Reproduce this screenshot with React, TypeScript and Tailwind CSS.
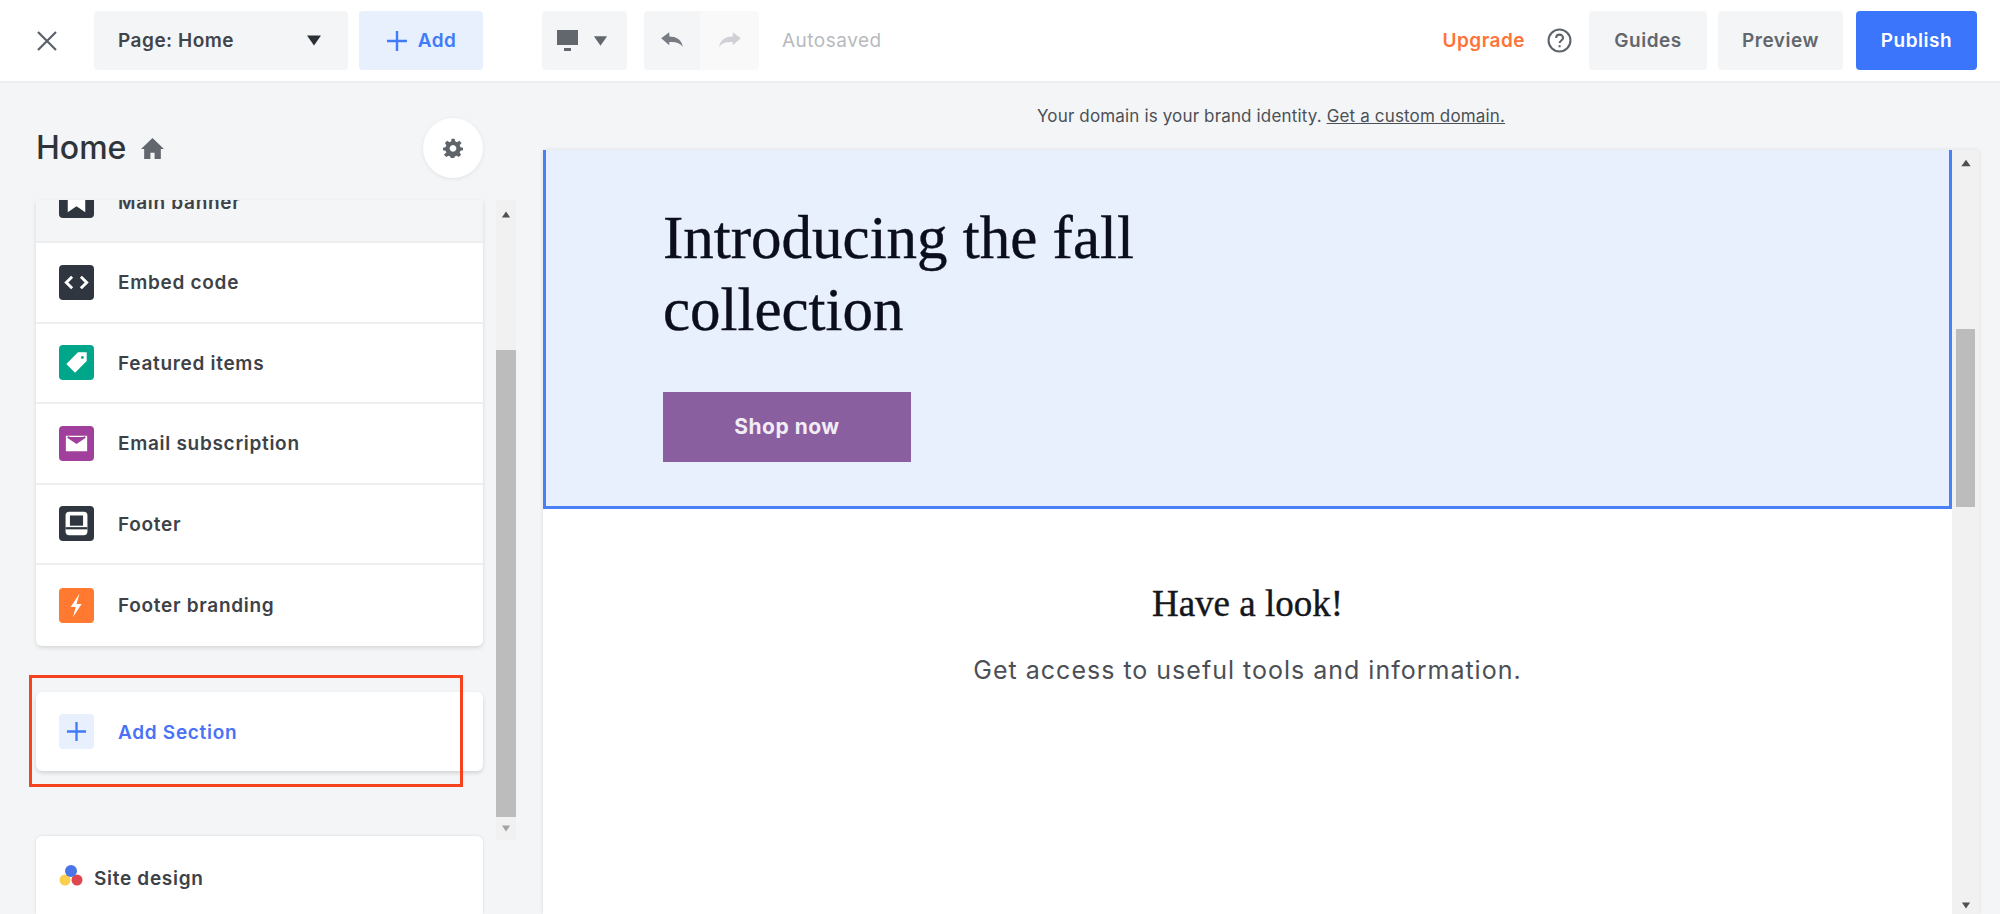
const sans = 'font-["Inter",sans-serif]';

function Caret({ className }: { className: string }) {
  return (
    <svg viewBox="0 0 16 12" className={className} fill="currentColor">
      <path d="M1 1h14L8 11z" />
    </svg>
  );
}

function UndoIcon({ flip }: { flip?: boolean }) {
  return (
    <svg viewBox="0 0 24 24" className={`w-[26px] h-[26px] ${flip ? '-scale-x-100' : ''}`} fill="currentColor">
      <path d="M2 9.500 9.500 4v3.800c6.500 0 11.500 3 12.500 9.700-2.500-3.700-6.500-5-12.500-4.500V16z" />
    </svg>
  );
}

function HeaderBar() {
  return (
    <header className="h-[83px] shrink-0 bg-white border-b-2 border-[#eeeff1] flex items-center pl-[36px] pr-[23px] text-[19px] tracking-[0.5px]">
      <svg viewBox="0 0 22 22" className="w-[22px] h-[22px] text-[#5b6068] mr-[36px]" fill="none" stroke="currentColor" strokeWidth="2.2">
        <path d="M2 2l18 18M20 2 2 20" />
      </svg>
      <button className="w-[254px] h-[59px] bg-[#f4f5f6] rounded-[4px] flex items-center justify-between pl-[24px] pr-[26px] font-semibold text-[#3f444b]">
        <span className="mt-[2px]">Page: Home</span>
        <Caret className="w-[16px] h-[13px] text-[#2b3036]" />
      </button>
      <button className="w-[124px] h-[59px] ml-[11px] bg-[#e8effd] rounded-[4px] flex items-center justify-center gap-[10px] font-semibold text-[#3f7bfa]">
        <svg viewBox="0 0 22 22" className="w-[22px] h-[22px]" fill="none" stroke="currentColor" strokeWidth="2.4">
          <path d="M11 1v20M1 11h20" />
        </svg>
        <span className="mt-[2px]">Add</span>
      </button>
      <button className="w-[85px] h-[59px] ml-[59px] bg-[#f4f5f6] rounded-[4px] flex items-center gap-[14px] pl-[15px] text-[#62676e]">
        <svg viewBox="0 0 22 22" className="w-[22px] h-[22px]" fill="currentColor">
          <path d="M0 0h21v15H0zM7 18h7v3H7z" />
        </svg>
        <Caret className="w-[15px] h-[12px]" />
      </button>
      <div className="flex ml-[17px]">
        <button className="w-[56px] h-[59px] bg-[#f4f5f6] rounded-l-[4px] flex items-center justify-center text-[#777b82]">
          <UndoIcon />
        </button>
        <button className="w-[59px] h-[59px] bg-[#f9f9fa] rounded-r-[4px] flex items-center justify-center text-[#cfd1d4]">
          <UndoIcon flip />
        </button>
      </div>
      <span className="ml-[23px] mt-[2px] text-[#b7babe]">Autosaved</span>
      <div className="ml-auto flex items-center">
        <span className="mt-[2px] font-semibold text-[#ff7338]">Upgrade</span>
        <svg viewBox="0 0 24 24" className="w-[25px] h-[25px] ml-[22px] mr-[17px] text-[#5f646b]" fill="none" stroke="currentColor" strokeWidth="2">
          <circle cx="12" cy="12" r="10.500" />
          <path d="M8.800 9.500c0-4.200 6.600-4.200 6.600 0 0 2.500-3.300 2.500-3.300 5" />
          <path d="M12.100 16.500v2" />
        </svg>
        <button className="w-[118px] h-[59px] pt-[2px] bg-[#f4f5f6] rounded-[4px] font-semibold text-[#62676e]">Guides</button>
        <button className="w-[125px] h-[59px] pt-[2px] ml-[11px] bg-[#f4f5f6] rounded-[4px] font-semibold text-[#62676e]">Preview</button>
        <button className="w-[121px] h-[59px] pt-[2px] ml-[13px] bg-[#3a75fb] rounded-[4px] font-semibold text-white">Publish</button>
      </div>
    </header>
  );
}

const rows = [
  { label: 'Embed code', bg: 'bg-[#2f3640]', icon: <path d="M9 8l-4 4 4 4M15 8l4 4-4 4" fill="none" stroke="white" strokeWidth="2" /> },
  { label: 'Featured items', bg: 'bg-[#00a68a]', icon: <path d="M5 13l8-8h6v6l-8 8zM16 7.500a1 1 0 1 0 .01 0z" fill="white" fillRule="evenodd" /> },
  { label: 'Email subscription', bg: 'bg-[#a0409c]', icon: <path d="M4 6h16v12H4zM6 7.500l6 4 6-4" fill="white" stroke="#a0409c" strokeWidth="1.400" /> },
  {
    label: 'Footer',
    bg: 'bg-[#2f3640]',
    icon: (
      <>
        <rect x="4.500" y="4" width="15" height="16" rx="2.500" fill="white" />
        <rect x="7.500" y="6.500" width="9" height="7" fill="#2f3640" />
        <rect x="4.500" y="14.500" width="15" height="1.500" fill="#2f3640" />
      </>
    ),
  },
  { label: 'Footer branding', bg: 'bg-[#ff7a30]', icon: <path d="M14 4 8 13h3.500L9.500 20l6-9H12z" fill="white" /> },
];

function Row({ label, bg, icon }: { label: string; bg: string; icon: React.ReactNode }) {
  return (
    <div className="h-[80.500px] flex items-center pl-[23px] border-b-2 border-[#eceeef] last:border-b-0">
      <svg viewBox="0 0 24 24" className={`w-[35px] h-[35px] rounded-[4px] ${bg}`}>
        {icon}
      </svg>
      <span className="ml-[24px] mt-[2px] text-[19px] tracking-[0.7px] font-semibold text-[#3d4249]">{label}</span>
    </div>
  );
}

function Sidebar() {
  return (
    <aside className="w-[543px] shrink-0 flex flex-col">
      <div className="h-[117px] shrink-0 flex items-center justify-between pl-[36px] pr-[60px] pt-[12px]">
        <div className="flex items-center gap-[14px]">
          <h1 className="text-[32px] leading-none font-medium text-[#2f343b]">Home</h1>
          <svg viewBox="0 0 24 24" className="w-[25px] h-[25px] text-[#62676e] mt-[2px]" fill="currentColor">
            <path d="M12 2 1 12.500h3V22h6v-6h4v6h6v-9.500h3z" />
          </svg>
        </div>
        <div className="w-[60px] h-[60px] bg-white rounded-full shadow-[0_1px_4px_rgba(0,0,0,0.08)] flex items-center justify-center">
          <svg viewBox="0 0 24 24" className="w-[20px] h-[20px] text-[#5f646b]" fill="currentColor">
            <path fillRule="evenodd" d="M10 1h4l.6 3 2.300 1 2.600-1.700 2.800 2.800L20 8.700l1 2.300 3 .6v3l-3 .6-1 2.300 1.700 2.600-2.800 2.800-2.600-1.700-2.300 1-.6 3h-4l-.6-3-2.300-1-2.600 1.700-2.800-2.800L4 17.500l-1-2.300-3-.6v-3l3-.6 1-2.300L2.300 6.100l2.800-2.800L7.700 5 10 4zM12 8.500a4 4 0 1 0 .01 0z" />
          </svg>
        </div>
      </div>
      <div className="flex-1 min-h-0 flex">
        <div className="w-[447px] ml-[36px] flex flex-col">
          <div className="h-[446px] rounded-b-[6px] shadow-[0_2px_4px_rgba(0,0,0,0.12)] overflow-hidden bg-white shrink-0">
            <div className="h-[43px] bg-[#f4f5f6] border-b-2 border-[#eceeef] overflow-hidden flex items-start pl-[23px]">
              <svg viewBox="0 0 24 24" className="w-[35px] h-[35px] rounded-b-[4px] bg-[#2f3640] -mt-[17px] shrink-0">
                <path d="M6 6h12v14l-6-4-6 4z" fill="white" />
              </svg>
              <span className="ml-[24px] -mt-[11px] text-[19px] tracking-[0.7px] leading-[28px] font-semibold text-[#3d4249]">Main banner</span>
            </div>
            {rows.map((r) => (
              <Row key={r.label} {...r} />
            ))}
          </div>
          <div className="mt-[46px] h-[79px] shrink-0 bg-white rounded-[6px] shadow-[0_2px_4px_rgba(0,0,0,0.14)] flex items-center pl-[23px] relative">
            <span className="w-[35px] h-[35px] rounded-[4px] bg-[#e8effd] flex items-center justify-center">
              <svg viewBox="0 0 22 22" className="w-[21px] h-[21px] text-[#3f7bfa]" fill="none" stroke="currentColor" strokeWidth="2.400">
                <path d="M11 1v20M1 11h20" />
              </svg>
            </span>
            <span className="ml-[24px] mt-[4px] text-[19px] tracking-[0.7px] font-semibold text-[#4a72f5]">Add Section</span>
            <div className="absolute left-[-7px] top-[-17px] w-[434px] h-[112px] border-[3px] border-[#f5421f]" />
          </div>
          <div className="mt-[65px] flex-1 bg-white rounded-t-[6px] shadow-[0_0_3px_rgba(0,0,0,0.12)] flex items-start pl-[23px] pt-[27px]">
            <svg viewBox="0 0 24 24" className="w-[24px] h-[24px] shrink-0">
              <circle cx="6" cy="17" r="5.500" fill="#fbcf4d" />
              <circle cx="18" cy="17" r="5.500" fill="#e0464d" />
              <circle cx="12" cy="8" r="6" fill="#4a74e8" />
            </svg>
            <span className="ml-[11px] mt-[2px] text-[19px] tracking-[0.7px] font-semibold text-[#3d4249]">Site design</span>
          </div>
        </div>
        <div className="w-[20px] ml-[13px] h-[640px] bg-[#f1f1f1] flex flex-col items-center">
          <div className="h-[150px] w-full flex flex-col items-center pt-[11px]">
            <Caret className="w-[12px] h-[7px] text-[#505050] rotate-180" />
          </div>
          <div className="h-[467px] w-full bg-[#bcbcbc]" />
          <Caret className="w-[12px] h-[7px] text-[#a3a3a3] mt-[8px]" />
        </div>
      </div>
    </aside>
  );
}

function Preview() {
  return (
    <main className="flex-1 min-w-0 flex flex-col pr-[21px]">
      <div className="h-[67px] shrink-0 flex items-center justify-center pl-[20px] text-[17px] tracking-[0.15px] text-[#4b5056]">
        <span>
          Your domain is your brand identity. <span className="underline">Get a custom domain.</span>
        </span>
      </div>
      <div className="flex-1 min-h-0 flex shadow-[0_0_4px_rgba(0,0,0,0.1)] bg-white">
        <div className="flex-1 min-w-0 flex flex-col">
          <section className="h-[359px] shrink-0 bg-[#e8effd] border-[3px] border-t-0 border-[#4a80f5] pl-[117px] pt-[52px]">
            <h2 className='font-["Liberation_Serif",serif] text-[61px] leading-[72px] text-[#0b0f1c] [-webkit-text-stroke:0.4px_#0b0f1c]'>
              Introducing the fall
              <br />
              collection
            </h2>
            <button className="mt-[46px] w-[248px] h-[70px] bg-[#8a5fa0] text-[21px] tracking-[0.5px] font-bold text-[#f2ecf5]">Shop now</button>
          </section>
          <section className="flex flex-col items-center pt-[73px]">
            <h3 className='font-["Liberation_Serif",serif] text-[37px] leading-[44px] text-[#15171c] [-webkit-text-stroke:0.4px_#15171c]'>Have a look!</h3>
            <p className="mt-[28px] text-[25px] leading-[32px] tracking-[1px] text-[#4c4f55]">Get access to useful tools and information.</p>
          </section>
        </div>
        <div className="w-[27px] shrink-0 bg-[#f1f1f1] flex flex-col items-center">
          <div className="h-[179px] w-full flex justify-center pt-[9px]">
            <Caret className="w-[12px] h-[8px] text-[#505050] rotate-180" />
          </div>
          <div className="h-[178px] w-[19px] bg-[#bcbcbc]" />
          <Caret className="w-[10px] h-[7px] text-[#505050] mt-auto mb-[5px]" />
        </div>
      </div>
    </main>
  );
}

export default function App() {
  return (
    <div className={`${sans} w-[2000px] h-[914px] overflow-hidden bg-[#f4f5f6] flex flex-col`}>
      <HeaderBar />
      <div className="flex-1 min-h-0 flex">
        <Sidebar />
        <Preview />
      </div>
    </div>
  );
}
